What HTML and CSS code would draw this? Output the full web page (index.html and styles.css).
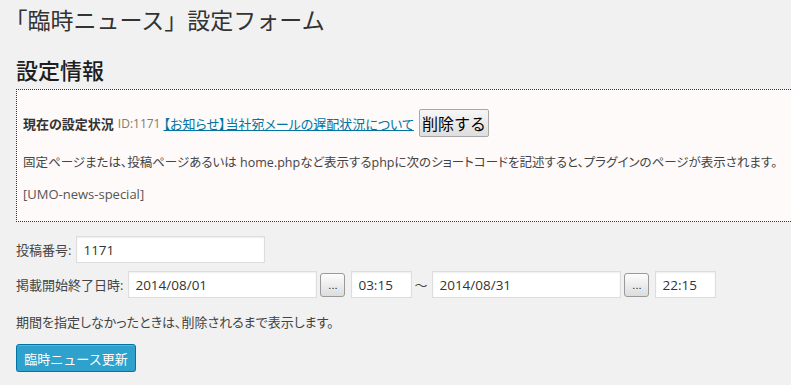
FILE: index.html
```html
<!DOCTYPE html>
<html lang="ja">
<head>
    <meta charset="UTF-8">
    <title>臨時ニュース設定</title>
    <link rel="stylesheet" href="styles.css">
</head>
<body>
    <div class="wrap">
        <h2 class="page-title"><span class="open-bracket">「</span>臨時ニュース」設定フォーム</h2>
        <h3 class="section-title">設定情報</h3>

        <div class="current-box">
            <div class="current-row">
                <strong class="current-label">現在の設定状況</strong>
                <span class="post-id">ID:1171</span>
                <a href="#" class="post-link">【お知らせ】当社宛メールの遅配状況について</a>
                <button type="button" class="delete-btn">削除する</button>
            </div>
            <p class="note">固定ページまたは、投稿ページあるいは home.phpなど表示するphpに次のショートコードを記述すると、プラグインのページが表示されます。</p>
            <p class="shortcode">[UMO-news-special]</p>
        </div>

        <form class="news-form">
            <div class="form-row">
                <label for="postId">投稿番号:</label>
                <input type="text" id="postId" class="input-id" value="1171">
            </div>
            <div class="form-row">
                <label for="startDate">掲載開始終了日時:</label>
                <input type="text" id="startDate" class="input-date" value="2014/08/01">
                <button type="button" class="pick-btn">...</button>
                <input type="text" class="input-time" value="03:15">
                <span class="tilde">～</span>
                <input type="text" class="input-date" value="2014/08/31">
                <button type="button" class="pick-btn">...</button>
                <input type="text" class="input-time" value="22:15">
            </div>
            <p class="form-note">期間を指定しなかったときは、削除されるまで表示します。</p>
            <button type="submit" class="update-btn">臨時ニュース更新</button>
        </form>
    </div>
</body>
</html>
```

FILE: styles.css
```css
* {
    margin: 0;
    padding: 0;
    box-sizing: border-box;
}

body {
    font-family: "Open Sans", "Noto Sans CJK JP", sans-serif;
    font-size: 13px;
    color: #444;
    background-color: #f1f1f1;
    font-feature-settings: "palt";
    overflow: hidden;
}

.wrap {
    padding: 0 0 0 16px;
}

.page-title {
    font-size: 23px;
    font-weight: 400;
    color: #333;
    line-height: 29px;
    padding-top: 6px;
    font-feature-settings: normal;
}

.open-bracket {
    font-feature-settings: "halt";
}

.section-title {
    font-size: 22px;
    font-weight: 500;
    color: #1e1e1e;
    line-height: 30px;
    margin-top: 20px;
}

.current-box {
    margin-top: 4px;
    margin-right: -20px;
    height: 133px;
    border: 1px dotted #333;
    background: #fefaf9;
    padding: 18px 6px 0;
}

.current-row {
    display: flex;
    align-items: center;
    height: 30px;
}

.current-label {
    font-weight: 700;
    color: #333;
    margin-right: 4px;
}

.post-id {
    font-size: 12px;
    color: #857a66;
    margin-right: 3px;
}

.post-link {
    color: #0074a2;
    text-decoration: underline;
    margin-right: 5px;
}

.delete-btn {
    font-family: "Noto Sans CJK JP", sans-serif;
    font-size: 16px;
    color: #000;
    height: 28px;
    padding: 0 2px;
    border: 1px solid #a8a8a8;
    border-radius: 2px;
    background: linear-gradient(#f6f6f6, #dedede);
}

.note {
    margin-top: 15px;
    line-height: 20px;
    color: #444;
    font-size: 12.5px;
    white-space: nowrap;
}

.shortcode {
    margin-top: 11px;
    line-height: 20px;
    color: #555;
}

.news-form {
    padding-top: 14px;
}

.form-row {
    display: flex;
    align-items: center;
    margin-bottom: 8px;
}

.form-row label {
    margin-right: 5px;
    color: #444;
}

input {
    font-family: "Open Sans", sans-serif;
    font-size: 13.5px;
    color: #333;
    height: 27px;
    padding: 0 6px;
    background: #fff;
    border: 1px solid #ddd;
    box-shadow: inset 0 1px 2px rgba(0, 0, 0, 0.07);
    outline: none;
}

.input-id {
    width: 189px;
}

.input-date {
    width: 189px;
}

.input-time {
    width: 61px;
}

.pick-btn {
    width: 25px;
    height: 24px;
    margin: 0 6px 0 3px;
    font-size: 11px;
    color: #222;
    border: 1px solid #999;
    border-radius: 3px;
    background: linear-gradient(#fdfdfd, #dcdcdc);
}

.tilde {
    margin: 0 5px 0 2px;
    color: #444;
    font-size: 13px;
}

.form-note {
    margin-top: 14px;
    line-height: 20px;
}

.update-btn {
    margin-top: 12px;
    width: 120px;
    height: 28px;
    font-family: "Open Sans", "Noto Sans CJK JP", sans-serif;
    font-size: 13px;
    color: #fff;
    background: #2ea2cc;
    border: 1px solid #0074a2;
    border-radius: 3px;
    box-shadow: inset 0 1px 0 rgba(120, 200, 230, 0.5), 0 1px 0 rgba(0, 0, 0, 0.15);
}
```
